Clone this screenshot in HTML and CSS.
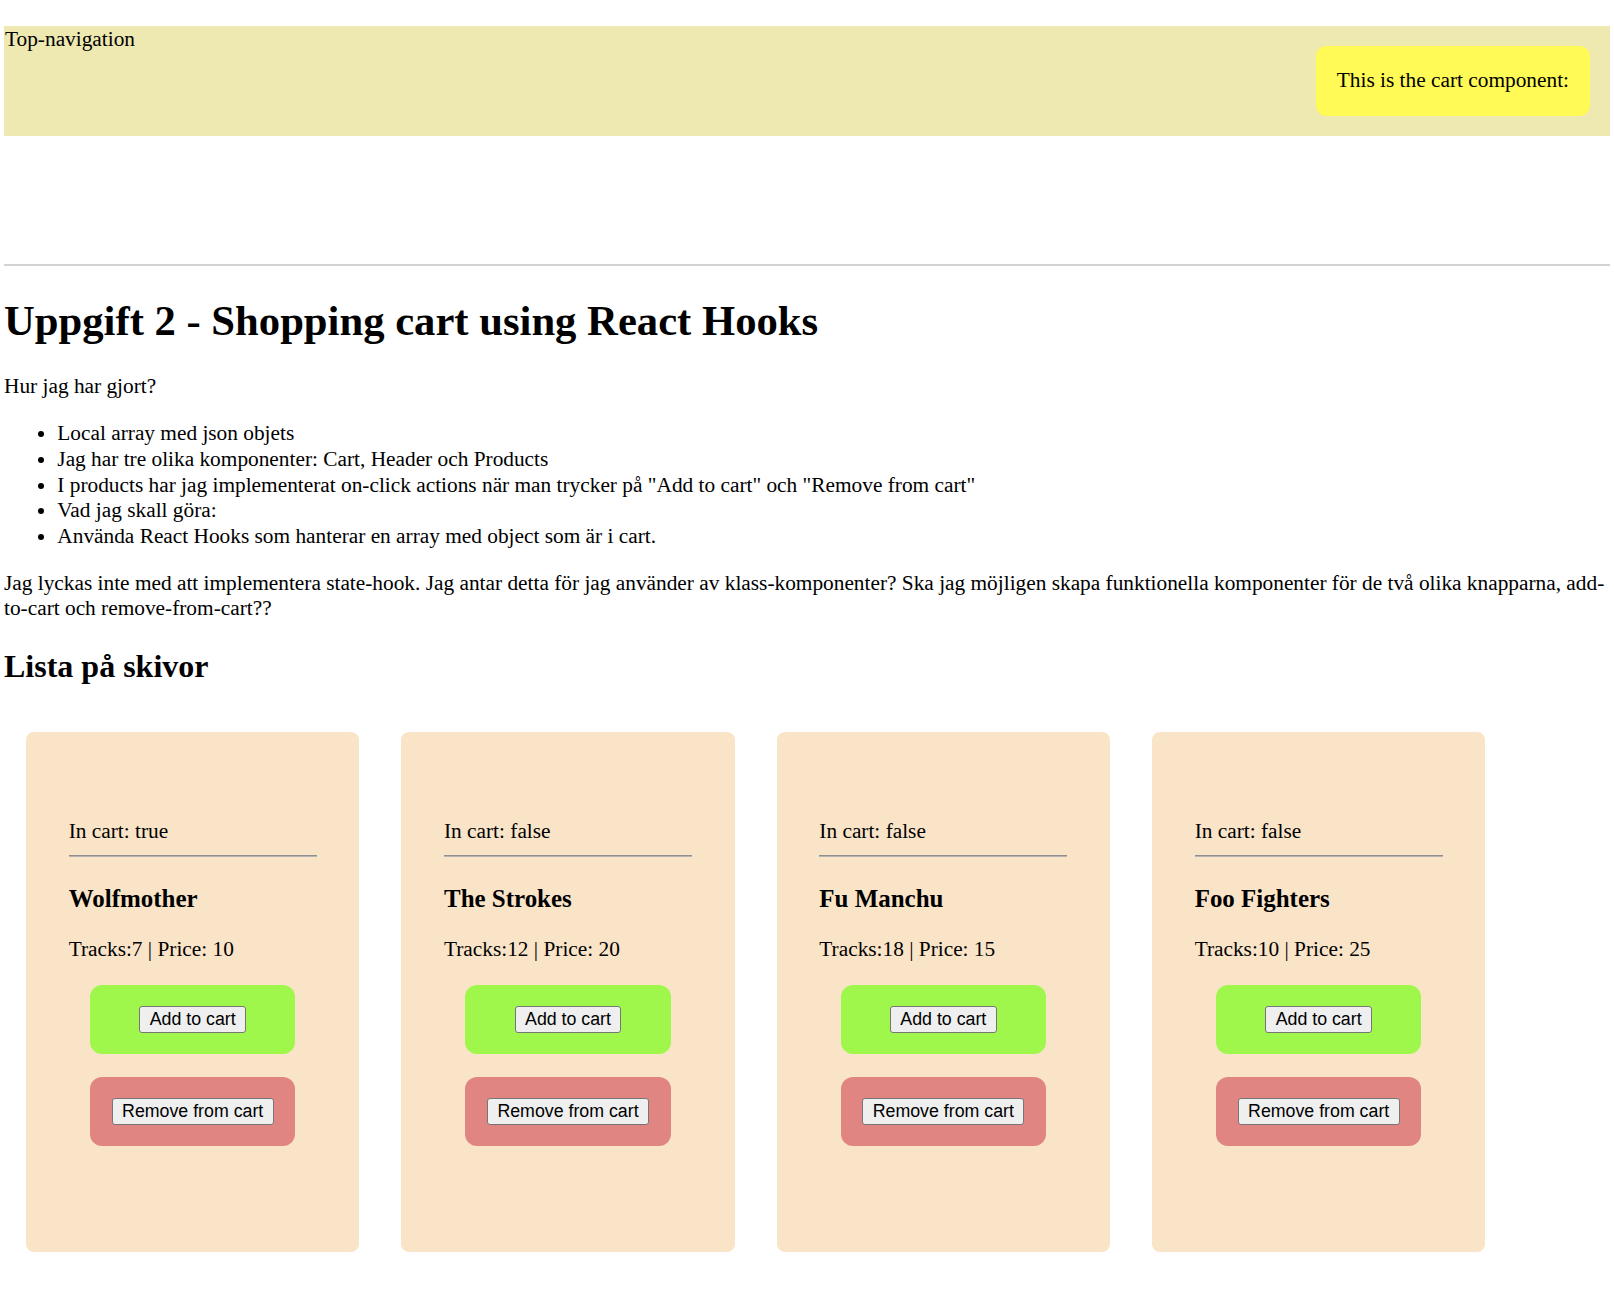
FILE: index.html
```html
<!DOCTYPE html>
<html lang="sv">
<head>
<meta charset="utf-8">
<title>Uppgift 2 - Shopping cart using React Hooks</title>
<link rel="stylesheet" href="styles.css">
</head>
<body>
<header class="topnav">
  <div class="topnav-title">Top-navigation</div>
  <div class="cart">This is the cart component:</div>
</header>
<hr class="divider">
<main>
  <h1 class="title">Uppgift 2 - Shopping cart using React Hooks</h1>
  <p class="text">Hur jag har gjort?</p>
  <ul class="list">
    <li>Local array med json objets</li>
    <li>Jag har tre olika komponenter: Cart, Header och Products</li>
    <li>I products har jag implementerat on-click actions när man trycker på "Add to cart" och "Remove from cart"</li>
    <li>Vad jag skall göra:</li>
    <li>Använda React Hooks som hanterar en array med object som är i cart.</li>
  </ul>
  <p class="text">Jag lyckas inte med att implementera state-hook. Jag antar detta för jag använder av klass-komponenter? Ska jag möjligen skapa funktionella komponenter för de två olika knapparna, add-to-cart och remove-from-cart??</p>
  <h2 class="subtitle">Lista på skivor</h2>
  <section class="cards">
    <article class="card">
      <div class="in-cart">In cart: true</div>
      <hr class="rule">
      <h3 class="band">Wolfmother</h3>
      <p class="tracks">Tracks:7 | Price: 10</p>
      <div class="action action-add"><button class="btn" type="button">Add to cart</button></div>
      <div class="action action-remove"><button class="btn" type="button">Remove from cart</button></div>
    </article>
    <article class="card">
      <div class="in-cart">In cart: false</div>
      <hr class="rule">
      <h3 class="band">The Strokes</h3>
      <p class="tracks">Tracks:12 | Price: 20</p>
      <div class="action action-add"><button class="btn" type="button">Add to cart</button></div>
      <div class="action action-remove"><button class="btn" type="button">Remove from cart</button></div>
    </article>
    <article class="card">
      <div class="in-cart">In cart: false</div>
      <hr class="rule">
      <h3 class="band">Fu Manchu</h3>
      <p class="tracks">Tracks:18 | Price: 15</p>
      <div class="action action-add"><button class="btn" type="button">Add to cart</button></div>
      <div class="action action-remove"><button class="btn" type="button">Remove from cart</button></div>
    </article>
    <article class="card">
      <div class="in-cart">In cart: false</div>
      <hr class="rule">
      <h3 class="band">Foo Fighters</h3>
      <p class="tracks">Tracks:10 | Price: 25</p>
      <div class="action action-add"><button class="btn" type="button">Add to cart</button></div>
      <div class="action action-remove"><button class="btn" type="button">Remove from cart</button></div>
    </article>
  </section>
</main>
</body>
</html>
```
FILE: styles.css
```css
html {
  background: #fff;
}

body {
  margin: 0 4px;
  font-family: "Liberation Serif", "Times New Roman", Times, serif;
  font-size: 21.333px;
  line-height: 1.2;
  color: #000;
}

.topnav {
  margin-top: 26px;
  background: #eee8b1;
  display: flex;
  justify-content: space-between;
  align-items: flex-start;
}

.topnav-title {
  line-height: 25.6px;
  padding: 1px 0 0 1px;
}

.cart {
  margin: 20px;
  padding: 0 21px;
  height: 70px;
  display: flex;
  align-items: center;
  background: #fffa55;
  border-radius: 10px;
}

.divider {
  margin: 128px 0 0;
  border: 0;
  border-top: 2px solid #d3d3d3;
  height: 0;
}

.title {
  font-size: 42.667px;
  line-height: 51.2px;
  margin: 28.6px 0;
  font-weight: bold;
}

.text {
  margin: 21.333px 0;
  line-height: 25.6px;
}

.list {
  margin: 21.333px 0;
  padding-left: 53.333px;
  line-height: 25.6px;
}

.subtitle {
  font-size: 32px;
  line-height: 36.8px;
  margin: 26.56px 0;
  font-weight: bold;
}

.cards {
  display: flex;
  padding-top: 20px;
  padding-bottom: 30px;
}

.card {
  box-sizing: border-box;
  width: 333.33px;
  flex: none;
  margin: 0 21px;
  padding: 87px 42.667px 106px;
  background: #fae4c8;
  border-radius: 8px;
}

.card:first-child {
  margin-left: 22px;
}

.in-cart {
  line-height: 25.6px;
}

.rule {
  margin: 10.67px 0 0;
  border: 0;
  border-top: 1px solid #8f8f8f;
  border-bottom: 1px solid #b4b4b4;
  height: 0;
}

.band {
  font-size: 24.96px;
  line-height: 29.95px;
  margin: 26.7px 0 0;
  font-weight: bold;
}

.tracks {
  margin: 23.4px 0 0;
  line-height: 25.6px;
}

.action {
  margin: 22.3px 21.333px 0;
  height: 69.4px;
  border-radius: 12px;
  display: flex;
  align-items: center;
  justify-content: center;
}

.action-add {
  background: #a0f74c;
}

.action-remove {
  background: #e08582;
  margin-top: 22.4px;
}

.btn {
  font-family: "Liberation Sans", Arial, Helvetica, sans-serif;
  font-size: 17.78px;
  line-height: normal;
  padding: 2px 9.5px;
  border: 1.5px solid #767676;
  border-radius: 3px;
  background: #efefef;
  color: #000;
}
```
